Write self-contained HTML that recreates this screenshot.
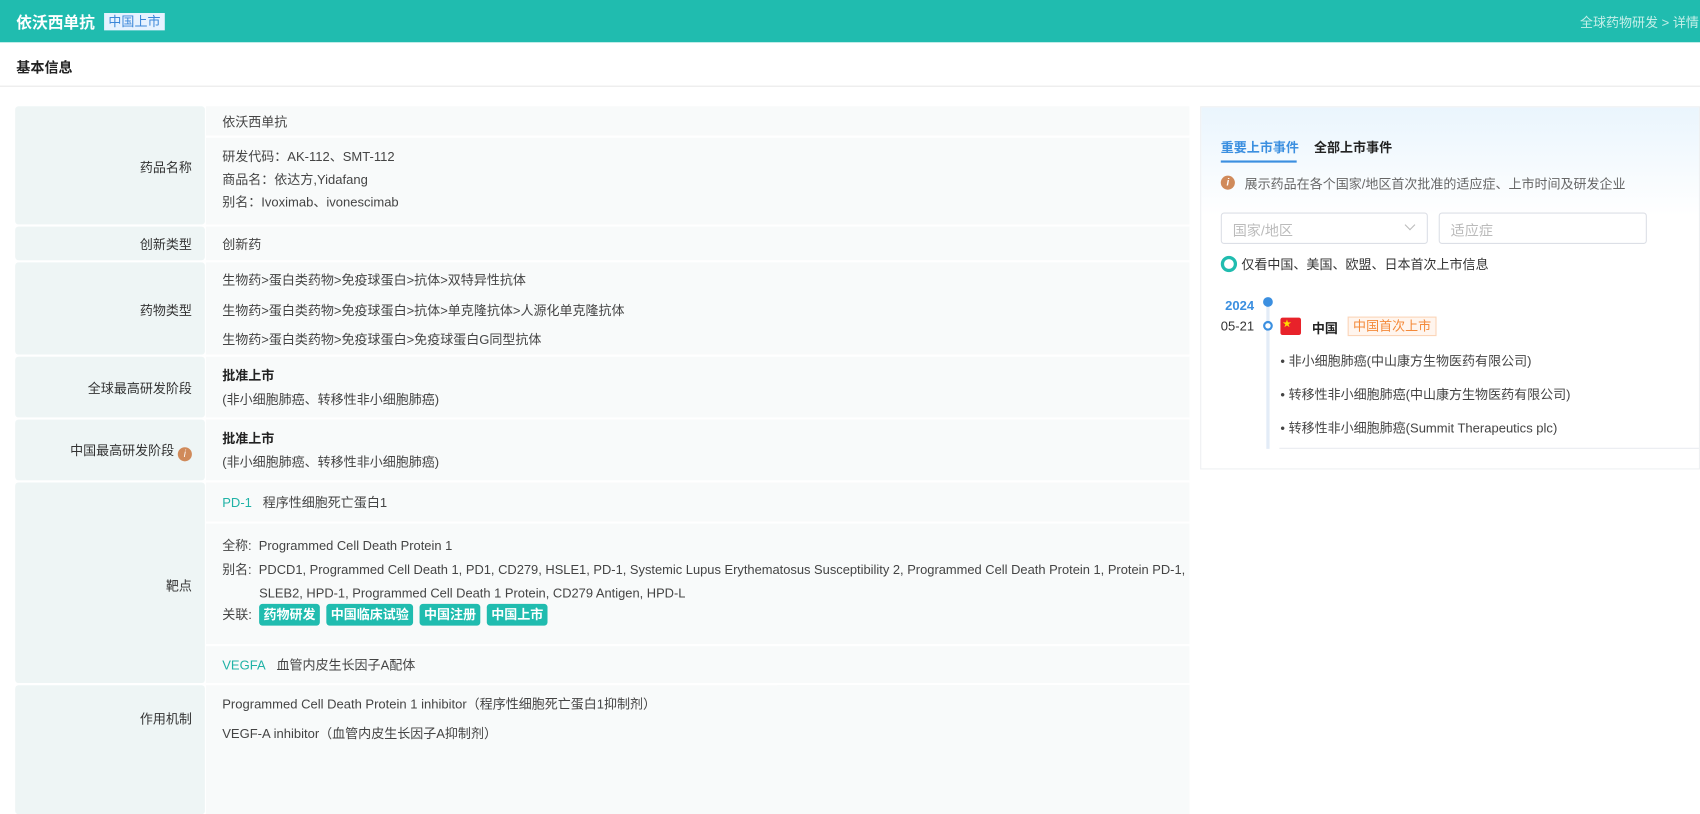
<!DOCTYPE html>
<html><head><meta charset="utf-8"><style>
*{margin:0;padding:0;box-sizing:border-box}
body{width:1700px;height:751px;overflow:hidden;background:#fff;font-family:"Liberation Sans","Noto Sans CJK SC",sans-serif;font-size:12px;color:#333;position:relative}
#w{position:absolute;left:0;top:0;width:1568px;height:693px;transform:scale(1.08418);transform-origin:0 0}
.a{position:absolute;white-space:nowrap}
.hdr{position:absolute;left:0;top:0;width:1568px;height:39px;background:#20bcaf}
.lab{position:absolute;left:14px;width:175px;background:#eef5f5;border-radius:3px}
.val{position:absolute;left:190px;width:907px;background:#f8fafa}
.lt{position:absolute;right:12px;font-size:12px;color:#333;transform:translateY(-50%)}
.t{position:absolute;left:205px;transform:translateY(-50%);color:#444}
.tag{display:inline-block;background:#20bcaf;color:#fff;font-weight:bold;padding:0 4px;height:20px;line-height:20px;border-radius:3px;margin-right:6px}
</style></head><body><div id="w">
<div class="hdr"></div>
<div class="a" style="left:15px;top:10px;font-size:14.5px;font-weight:bold;color:#fff">依沃西单抗</div>
<div class="a" style="left:96px;top:12px;height:16px;line-height:16px;padding:0 4px;background:#e6f2ff;color:#3b87d8;font-size:12px">中国上市</div>
<div class="a" style="right:1px;top:12px;color:#c5efe9;font-size:12px">全球药物研发 &gt; 详情</div>
<div class="a" style="left:15px;top:52px;font-size:13px;font-weight:bold;color:#222">基本信息</div>
<div class="a" style="left:0;top:79px;width:1568px;height:1px;background:#e8e8e8"></div>

<div class="lab" style="top:98px;height:109px"><div class="lt" style="top:56px">药品名称</div></div>
<div class="val" style="top:98px;height:27px"></div>
<div class="val" style="top:127px;height:80px"></div>
<div class="t" style="top:112px">依沃西单抗</div>
<div class="t" style="top:144px">研发代码：AK-112、SMT-112</div>
<div class="t" style="top:165px">商品名：依达方,Yidafang</div>
<div class="t" style="top:186px">别名：Ivoximab、ivonescimab</div>

<div class="lab" style="top:209px;height:31px"><div class="lt" style="top:16px">创新类型</div></div>
<div class="val" style="top:209px;height:31px"></div>
<div class="t" style="top:225px">创新药</div>

<div class="lab" style="top:242px;height:85px"><div class="lt" style="top:44px">药物类型</div></div>
<div class="val" style="top:242px;height:85px"></div>
<div class="t" style="top:258px">生物药&gt;蛋白类药物&gt;免疫球蛋白&gt;抗体&gt;双特异性抗体</div>
<div class="t" style="top:286px">生物药&gt;蛋白类药物&gt;免疫球蛋白&gt;抗体&gt;单克隆抗体&gt;人源化单克隆抗体</div>
<div class="t" style="top:313px">生物药&gt;蛋白类药物&gt;免疫球蛋白&gt;免疫球蛋白G同型抗体</div>

<div class="lab" style="top:329px;height:56px"><div class="lt" style="top:29px">全球最高研发阶段</div></div>
<div class="val" style="top:329px;height:56px"></div>
<div class="t" style="top:346px;font-weight:bold;color:#222">批准上市</div>
<div class="t" style="top:368px">(非小细胞肺癌、转移性非小细胞肺癌)</div>

<div class="lab" style="top:387px;height:56px"><div class="lt" style="top:29px">中国最高研发阶段 <span style="display:inline-block;width:13px;height:13px;border-radius:50%;background:#d08a5a;color:#fff;font-size:9px;font-style:italic;text-align:center;line-height:13px;vertical-align:-2px">i</span></div></div>
<div class="val" style="top:387px;height:56px"></div>
<div class="t" style="top:404px;font-weight:bold;color:#222">批准上市</div>
<div class="t" style="top:426px">(非小细胞肺癌、转移性非小细胞肺癌)</div>

<div class="lab" style="top:445px;height:185px"><div class="lt" style="top:95px">靶点</div></div>
<div class="val" style="top:445px;height:36px"></div>
<div class="val" style="top:483px;height:111px"></div>
<div class="val" style="top:596px;height:34px"></div>
<div class="t" style="top:463px"><span style="color:#20b2a6">PD-1</span>&nbsp;&nbsp; 程序性细胞死亡蛋白1</div>
<div class="t" style="top:503px;font-size:11.9px">全称:&nbsp; Programmed Cell Death Protein 1</div>
<div class="t" style="top:525px;font-size:11.9px">别名:&nbsp; PDCD1, Programmed Cell Death 1, PD1, CD279, HSLE1, PD-1, Systemic Lupus Erythematosus Susceptibility 2, Programmed Cell Death Protein 1, Protein PD-1,</div>
<div class="t" style="top:547px;left:239px;font-size:11.9px">SLEB2, HPD-1, Programmed Cell Death 1 Protein, CD279 Antigen, HPD-L</div>
<div class="t" style="top:567px">关联:&nbsp; <span class="tag">药物研发</span><span class="tag">中国临床试验</span><span class="tag">中国注册</span><span class="tag">中国上市</span></div>
<div class="t" style="top:613px"><span style="color:#20b2a6">VEGFA</span>&nbsp;&nbsp; 血管内皮生长因子A配体</div>

<div class="lab" style="top:632px;height:119px"><div class="lt" style="top:31px">作用机制</div></div>
<div class="val" style="top:632px;height:119px"></div>
<div class="t" style="top:649px">Programmed Cell Death Protein 1 inhibitor（程序性细胞死亡蛋白1抑制剂）</div>
<div class="t" style="top:676px">VEGF-A inhibitor（血管内皮生长因子A抑制剂）</div>

<div class="a" style="left:1107px;top:98px;width:461px;height:335px;border:1px solid #eef0f2;background:linear-gradient(180deg,#eaf5fd 0%,#fff 30%)"></div>
<div class="a" style="left:1126px;top:127px;font-weight:bold;color:#3b8fe0">重要上市事件</div>
<div class="a" style="left:1126px;top:148px;width:70px;height:2px;background:#3b8fe0"></div>
<div class="a" style="left:1212px;top:127px;font-weight:bold;color:#222">全部上市事件</div>
<div class="a" style="left:1126px;top:162px;width:13px;height:13px;border-radius:50%;background:#d08a5a;color:#fff;font-size:9px;font-style:italic;font-weight:bold;text-align:center;line-height:13px">i</div>
<div class="a" style="left:1148px;top:161px;color:#666">展示药品在各个国家/地区首次批准的适应症、上市时间及研发企业</div>
<div class="a" style="left:1126px;top:196px;width:191px;height:29px;border:1px solid #dcdfe6;border-radius:3px;background:#fff"></div>
<div class="a" style="left:1137px;top:202px;color:#bbb;font-size:13px">国家/地区</div>
<div class="a" style="left:1297px;top:204px;width:7px;height:7px;border-right:1px solid #bbb;border-bottom:1px solid #bbb;transform:rotate(45deg)"></div>
<div class="a" style="left:1327px;top:196px;width:192px;height:29px;border:1px solid #dcdfe6;border-radius:3px;background:#fff"></div>
<div class="a" style="left:1338px;top:202px;color:#bbb;font-size:13px">适应症</div>
<div class="a" style="left:1126px;top:236px;width:15px;height:15px;border-radius:50%;border:3px solid #20bcaf"></div>
<div class="a" style="left:1145px;top:235px;color:#333">仅看中国、美国、欧盟、日本首次上市信息</div>
<div class="a" style="left:1168px;top:282px;width:3px;height:132px;background:#e3ecf7"></div>
<div class="a" style="left:1165px;top:274px;width:9px;height:9px;border-radius:50%;background:#3b8fe0"></div>
<div class="a" style="left:1165px;top:296px;width:9px;height:9px;border-radius:50%;border:2px solid #3b8fe0;background:#fff"></div>
<div class="a" style="left:1130px;top:275px;font-weight:bold;color:#3b8fe0">2024</div>
<div class="a" style="left:1126px;top:294px;color:#333">05-21</div>
<div class="a" style="left:1181px;top:293px;width:19px;height:16px;background:#e8222a;border-radius:2px;color:#ffde00;font-size:8px;line-height:12px;padding-left:2px">★</div>
<div class="a" style="left:1210px;top:294px;font-weight:bold;color:#222">中国</div>
<div class="a" style="left:1243px;top:292px;height:18px;line-height:16px;padding:0 4px;border:1px solid #fbd5b8;background:#fff5ee;color:#f48a3a">中国首次上市</div>
<div class="a" style="left:1181px;top:324px;color:#444">• 非小细胞肺癌(中山康方生物医药有限公司)</div>
<div class="a" style="left:1181px;top:355px;color:#444">• 转移性非小细胞肺癌(中山康方生物医药有限公司)</div>
<div class="a" style="left:1181px;top:386px;color:#444">• 转移性非小细胞肺癌(Summit Therapeutics plc)</div>
<div class="a" style="left:1180px;top:413px;width:387px;height:1px;background:#e8ecf0"></div>
</div></body></html>
